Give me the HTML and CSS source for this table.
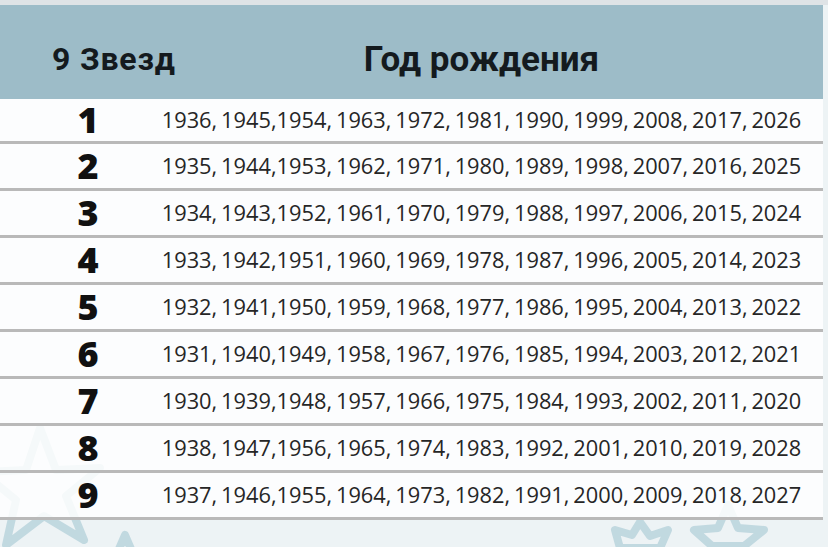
FILE: index.html
```html
<!DOCTYPE html>
<html lang="ru">
<head>
<meta charset="utf-8">
<title>9 Звезд</title>
<link rel="stylesheet" href="styles.css">
</head>
<body>
<div class="page">
  <svg class="stars" width="828" height="547" viewBox="0 0 828 547">
    <g fill="none" stroke="#b7d3dc" stroke-width="8" stroke-linejoin="round" stroke-linecap="round">
      <path d="M40 428 L56 470 L100 468 L66 496 L84 540 L44 516 L6 545 L16 500 L-18 472 L26 470 Z"/>
      <path d="M125 535 L134 556 L160 556 L140 570 L150 596 L125 580 L100 596 L110 570 L90 556 L116 556 Z"/>
      <path d="M640 522 L650 536 L668 530 L660 548 L620 548 L615 530 L632 535 Z"/>
      <path d="M728 505 L738 528 L764 530 L744 546 L712 546 L694 530 L718 528 Z"/>
    </g>
  </svg>
  <div class="topstrip"></div>
  <div class="table">
    <div class="head">
      <div class="h-num">9 Звезд</div>
      <div class="h-years">Год рождения</div>
    </div>
    <div class="row first"><div class="num">1</div><div class="years">1936, 1945,1954, 1963, 1972, 1981, 1990, 1999, 2008, 2017, 2026</div></div>
    <div class="row"><div class="num">2</div><div class="years">1935, 1944,1953, 1962, 1971, 1980, 1989, 1998, 2007, 2016, 2025</div></div>
    <div class="row"><div class="num">3</div><div class="years">1934, 1943,1952, 1961, 1970, 1979, 1988, 1997, 2006, 2015, 2024</div></div>
    <div class="row"><div class="num">4</div><div class="years">1933, 1942,1951, 1960, 1969, 1978, 1987, 1996, 2005, 2014, 2023</div></div>
    <div class="row"><div class="num">5</div><div class="years">1932, 1941,1950, 1959, 1968, 1977, 1986, 1995, 2004, 2013, 2022</div></div>
    <div class="row"><div class="num">6</div><div class="years">1931, 1940,1949, 1958, 1967, 1976, 1985, 1994, 2003, 2012, 2021</div></div>
    <div class="row"><div class="num">7</div><div class="years">1930, 1939,1948, 1957, 1966, 1975, 1984, 1993, 2002, 2011, 2020</div></div>
    <div class="row"><div class="num">8</div><div class="years">1938, 1947,1956, 1965, 1974, 1983, 1992, 2001, 2010, 2019, 2028</div></div>
    <div class="row"><div class="num">9</div><div class="years">1937, 1946,1955, 1964, 1973, 1982, 1991, 2000, 2009, 2018, 2027</div></div>
  </div>
</div>
</body>
</html>
```

FILE: styles.css
```css
html, body {
  margin: 0;
  padding: 0;
}
body {
  background: #eaf1f3;
  width: 828px;
  height: 547px;
  overflow: hidden;
}
.page {
  position: relative;
  width: 828px;
  height: 547px;
  background: #edf3f5;
}
.stars {
  position: absolute;
  left: 0;
  top: 0;
  z-index: 0;
  opacity: 0.8;
}
.topstrip {
  position: relative;
  height: 5px;
  background: #dfe3e6;
}
.table {
  position: relative;
  z-index: 1;
  width: 823px;
}
.head {
  display: grid;
  grid-template-columns: 140px 1fr;
  height: 94px;
  background: #9dbcc8;
  align-items: center;
  box-sizing: border-box;
  padding-top: 14px;
  font-family: Roboto, "Open Sans", sans-serif;
  font-weight: 700;
  color: #141a1e;
}
.h-num {
  padding-left: 52px;
  font-size: 32px;
  white-space: nowrap;
  letter-spacing: 0.8px;
}
.h-years {
  text-align: center;
  font-size: 35px;
}
.row {
  display: grid;
  grid-template-columns: 140px 1fr;
  align-items: center;
  height: 47px;
  box-sizing: border-box;
  border-bottom: 3px solid #b9b9b9;
  background: rgba(255, 255, 255, 0.84);
}
.row.first {
  height: 45px;
}
.num {
  text-align: center;
  padding-left: 36px;
  font-family: "Open Sans", sans-serif;
  font-weight: 800;
  font-size: 36px;
  line-height: 1;
  color: #111;
}
.years {
  text-align: center;
  font-family: "Open Sans", sans-serif;
  font-size: 21.8px;
  word-spacing: -1.8px;
  color: #262626;
  white-space: nowrap;
  line-height: 1;
}
```
